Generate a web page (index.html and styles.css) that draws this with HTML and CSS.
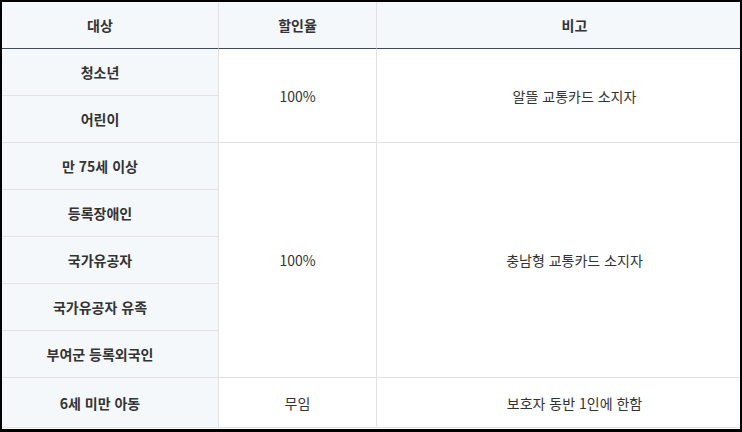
FILE: index.html
```html
<!DOCTYPE html>
<html lang="ko">
<head>
<meta charset="utf-8">
<link rel="stylesheet" href="styles.css">
</head>
<body>
<div class="frame">
<table class="fare">
  <colgroup>
    <col class="c1"><col class="c2"><col class="c3">
  </colgroup>
  <thead>
    <tr><th class="first">대상</th><th>할인율</th><th class="last">비고</th></tr>
  </thead>
  <tbody>
    <tr><td class="who first">청소년</td><td rowspan="2">100%</td><td rowspan="2" class="last">알뜰 교통카드 소지자</td></tr>
    <tr><td class="who first">어린이</td></tr>
    <tr><td class="who first">만 75세 이상</td><td rowspan="5">100%</td><td rowspan="5" class="last">충남형 교통카드 소지자</td></tr>
    <tr><td class="who first">등록장애인</td></tr>
    <tr><td class="who first">국가유공자</td></tr>
    <tr><td class="who first">국가유공자 유족</td></tr>
    <tr><td class="who first">부여군 등록외국인</td></tr>
    <tr class="end"><td class="who first">6세 미만 아동</td><td>무임</td><td class="last">보호자 동반 1인에 한함</td></tr>
  </tbody>
</table>
</div>
</body>
</html>
```

FILE: styles.css
```css
html, body {
  margin: 0;
  padding: 0;
}
body {
  background: #000;
  width: 742px;
  height: 432px;
  box-sizing: border-box;
  padding: 2px 2px 3px 2px;
  font-family: "Noto Sans CJK KR", "Noto Sans", sans-serif;
  color: #333;
}
.frame {
  background: #fff;
  height: 427px;
}
.fare {
  width: 738px;
  border-collapse: separate;
  border-spacing: 0;
  table-layout: fixed;
  font-size: 14px;
}
.c1 { width: 217px; }
.c2 { width: 158px; }
.c3 { width: 363px; }
.fare th, .fare td {
  padding: 0;
  text-align: center;
  vertical-align: middle;
  border-right: 1px solid #e2e2e2;
  border-bottom: 1px solid #e2e2e2;
  line-height: 20px;
}
.fare th {
  background: #f5f8fb;
  height: 46px;
  font-weight: 700;
  border-bottom: 1px solid #3b4a6b;
  color: #333;
}
.fare td {
  height: 46px;
  font-weight: 400;
  color: #333;
}
.fare td.who {
  background: #f5f8fb;
  font-weight: 700;
}
.fare .first {
  padding-right: 20px;
}
.fare .last {
  border-right: none;
  padding-left: 32px;
}
.fare tr.end td {
  height: 49px;
}
```
